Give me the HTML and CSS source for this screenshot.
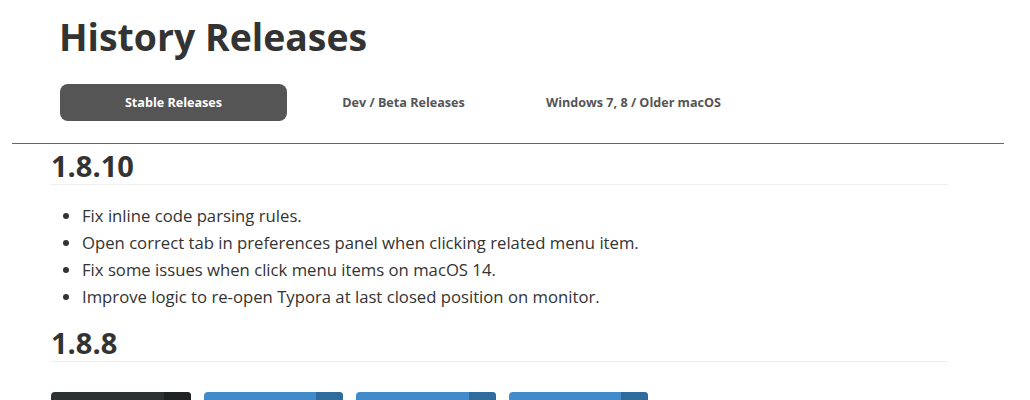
FILE: index.html
```html
<!DOCTYPE html>
<html>
	<head>
		<meta charset="UTF-8">
		<title>History Releases</title>
		<link rel="stylesheet" href="styles.css">
	</head>
	<body>
		<div class="top">
			<h1 class="title">History Releases</h1>
			<ul class="tabs">
				<li class="ac">Stable Releases</li>
				<li>Dev / Beta Releases</li>
				<li>Windows 7, 8 / Older macOS</li>
			</ul>
		</div>
		<div class="line"></div>
		<div class="main">
			<h2 class="ver">1.8.10</h2>
			<ul class="notes">
				<li>Fix inline code parsing rules.</li>
				<li>Open correct tab in preferences panel when clicking related menu item.</li>
				<li>Fix some issues when click menu items on macOS 14.</li>
				<li>Improve logic to re-open Typora at last closed position on monitor.</li>
			</ul>
			<h2 class="ver">1.8.8</h2>
			<div class="btns">
				<a href="javascript:;" class="btn dark"><span class="txt"></span><span class="end"></span></a>
				<a href="javascript:;" class="btn"><span class="txt"></span><span class="end"></span></a>
				<a href="javascript:;" class="btn"><span class="txt"></span><span class="end"></span></a>
				<a href="javascript:;" class="btn"><span class="txt"></span><span class="end"></span></a>
			</div>
		</div>
	</body>
</html>
```

FILE: styles.css
```css
* {margin:0; padding:0;}
li {list-style:none;}
body {font-family:"Open Sans", "Noto Sans", sans-serif; color:#333; background:#fff; overflow:hidden;}
.top {padding:12px 0 0 60px;}
.title {font-size:37.4px; font-weight:700; line-height:50px; color:#333; margin-left:-1px;}
.tabs {display:flex; gap:3px; margin-top:22px;}
.tabs li {width:227px; height:37px; line-height:37px; text-align:center; font-size:12.6px; font-weight:700; color:#555; border-radius:8px;}
.tabs li.ac {background:#555; color:#fff;}
.line {height:1px; background:#5b6c6c; margin:22px 26px 0 12px;}
.main {width:897px; padding-left:51px;}
.ver {font-size:29px; font-weight:700; line-height:36px; color:#333; border-bottom:1px solid #eee; padding-top:4px;}
.notes {padding:17px 0 11px 31px;}
.notes li {list-style:disc; font-size:16.7px; line-height:27px; color:#333;}
.btns {display:flex; gap:13px; margin-top:30px;}
.btn {display:flex; width:139.5px; height:40px; border-radius:4px; overflow:hidden; background:#428bca;}
.btn .txt {flex:1;}
.btn .end {width:27px; background:#2f6b9d;}
.btn.dark {background:#2c3133;}
.btn.dark .end {background:#1f2324;}
```
